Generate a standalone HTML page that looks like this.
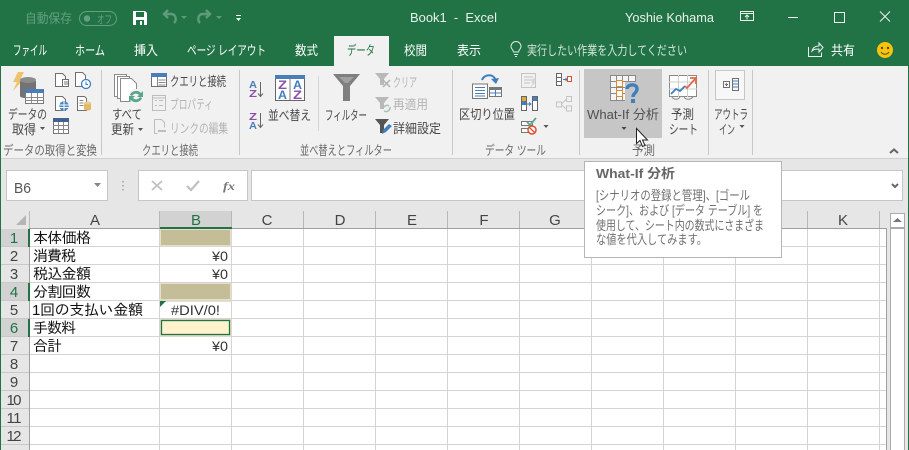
<!DOCTYPE html>
<html lang="ja"><head><meta charset="utf-8"><title>Book1 - Excel</title>
<style>
html,body{margin:0;padding:0;background:#e6e6e6;width:909px;height:450px;overflow:hidden}
svg{display:block}
text{font-family:"Liberation Sans","Noto Sans CJK JP",sans-serif;font-size:13px;fill:#484848;white-space:pre}
.w text{fill:#fff}
.d text{fill:#b4b4b4}
.l text{fill:#6a6a6a}
.c text{font-family:"Liberation Sans","IPAGothic",sans-serif;font-size:15px;fill:#111}
.h text{font-size:15px;fill:#444;text-anchor:middle}
.t text{fill:#707070;font-size:13px}
</style></head><body>
<svg xmlns="http://www.w3.org/2000/svg" width="909" height="450" viewBox="0 0 909 450">
<!-- backgrounds -->
<rect width="909" height="450" fill="#e6e6e6"/>
<rect width="909" height="66" fill="#217346"/>
<rect y="66" width="909" height="92" fill="#f1f1f1"/>
<rect y="158" width="909" height="1" fill="#d0d0d0"/>
<rect x="334" y="36" width="55" height="31" fill="#f1f1f1"/>

<!-- title bar -->
<g fill="none" stroke="#659f80">
<rect x="79.500" y="11.500" width="37" height="14" rx="7"/>
</g>
<circle cx="87" cy="18.500" r="3.200" fill="#659f80"/>
<g><text x="25" y="23" textLength="47" lengthAdjust="spacingAndGlyphs" style="fill:#659f80">自動保存</text>
<text x="97" y="23" textLength="15" lengthAdjust="spacingAndGlyphs" style="fill:#659f80;font-size:11px">オフ</text></g>
<!-- save -->
<path d="M133 11h12l2 2v12h-14z" fill="#fff"/>
<rect x="136" y="12" width="8" height="5" fill="#217346"/>
<rect x="136" y="20" width="8" height="5" fill="#217346"/>
<rect x="140" y="21" width="2" height="4" fill="#fff"/>
<!-- undo/redo -->
<path d="M174 23c3-3 2-9-3-9h-6M168 10l-4 4 4 4" fill="none" stroke="#5f9a7b" stroke-width="2.400"/>
<path d="M181 16h6l-3 3z" fill="#5f9a7b"/>
<path d="M200 23c-3-3-2-9 3-9h6M206 10l4 4-4 4" fill="none" stroke="#5f9a7b" stroke-width="2.400"/>
<path d="M216 16h6l-3 3z" fill="#5f9a7b"/>
<rect x="236" y="15" width="5" height="1" fill="#fff"/>
<path d="M236 18h5l-2.500 3z" fill="#fff"/>
<g class="w">
<text x="410" y="22" textLength="87" lengthAdjust="spacingAndGlyphs" style="fill:#e8f1ec">Book1  -  Excel</text>
<text x="625" y="22" textLength="89" lengthAdjust="spacingAndGlyphs" style="fill:#e8f1ec">Yoshie Kohama</text>
<text x="13" y="55" textLength="34" lengthAdjust="spacingAndGlyphs">ファイル</text>
<text x="75" y="55" textLength="30" lengthAdjust="spacingAndGlyphs">ホーム</text>
<text x="134" y="55" textLength="24" lengthAdjust="spacingAndGlyphs">挿入</text>
<text x="187" y="55" textLength="79" lengthAdjust="spacingAndGlyphs">ページ レイアウト</text>
<text x="295" y="55" textLength="23" lengthAdjust="spacingAndGlyphs">数式</text>
<text x="404" y="55" textLength="23" lengthAdjust="spacingAndGlyphs">校閲</text>
<text x="457" y="55" textLength="24" lengthAdjust="spacingAndGlyphs">表示</text>
<text x="527" y="55" textLength="160" lengthAdjust="spacingAndGlyphs" style="fill:#d3e3da">実行したい作業を入力してください</text>
<text x="831" y="55" textLength="24" lengthAdjust="spacingAndGlyphs">共有</text>
</g>
<text x="347" y="55" textLength="28" lengthAdjust="spacingAndGlyphs" style="fill:#217346">データ</text>
<!-- window buttons -->
<g fill="none" stroke="#f0f0f0">
<rect x="740.500" y="11.500" width="13" height="9"/>
<path d="M741 13.500h12M747 19.500v-4M745 17l2-2 2 2"/>
<path d="M788 17.500h10"/>
<rect x="834.500" y="12.500" width="10" height="10"/>
<path d="M880 11.500l10 10M890 11.500l-10 10"/>
<!-- bulb -->
<path d="M513.500 52c0-2-2.500-3-2.500-5.500a5 5 0 0 1 10 0c0 2.500-2.500 3.500-2.500 5.500z" stroke="#e0ebe5"/>
<path d="M514 54.500h4M515 56.500h2" stroke="#e0ebe5"/>
<!-- share -->
<path d="M808.500 47v9.500h13v-4M812 51c1-4 4-5 7-5v-3l4 4.500-4 4.500v-3c-3 0-5 0-7 2z"/>
</g>
<circle cx="885" cy="50" r="8" fill="#f6c40f"/>
<circle cx="882" cy="48" r="1.200" fill="#5a4a00"/><circle cx="888" cy="48" r="1.200" fill="#5a4a00"/>
<path d="M881 52c2 3 6 3 8 0" fill="none" stroke="#5a4a00"/>

<!-- ribbon separators -->
<g fill="#c8c8c8">
<rect x="101" y="70" width="1" height="85"/><rect x="239" y="70" width="1" height="85"/>
<rect x="452" y="70" width="1" height="85"/><rect x="579" y="70" width="1" height="85"/>
<rect x="708" y="70" width="1" height="85"/><rect x="752" y="70" width="1" height="85"/>
<rect x="318" y="76" width="1" height="55" fill="#d6d6d6"/>
</g>

<!-- What-If highlight -->
<rect x="584" y="69" width="78" height="69" fill="#c6c6c6"/>

<!-- Group 1 icons -->
<path d="M18 72h6l-4 8h3l-10 11 4-9h-4z" fill="#efc36b"/>
<path d="M20 81v15c0 3 16 3 16 0V81z" fill="#737373"/>
<ellipse cx="28" cy="80" rx="8" ry="3" fill="#8c8c8c"/>
<rect x="25.500" y="89.500" width="18" height="14" fill="#fff" stroke="#7a7a7a"/>
<rect x="25" y="89" width="19" height="4" fill="#4a7ebb"/>
<path d="M25 97.500h19M25 100.500h19M31.500 93v11M37.500 93v11" stroke="#8a8a8a" fill="none"/>
<g fill="#fff" stroke="#6f6f6f">
<path d="M55.500 73.500h7l3 3v10h-10z"/><rect x="62.500" y="79.500" width="6" height="7"/>
<path d="M75.500 72.500h7l3 3v6h-3v5h-7z"/>
<path d="M55.500 96.500h7l3 3v11h-10z"/>
<path d="M77.500 96.500h7l2 2v12h-9z"/>
</g>
<path d="M64 82h4M64 84h4" stroke="#777"/>
<circle cx="86" cy="84" r="4.500" fill="#fff" stroke="#3f7fbf" stroke-width="1.300"/><path d="M86 81.500v3h2" stroke="#3f7fbf" fill="none"/>
<circle cx="64" cy="106" r="4.800" fill="#4a86c0"/><path d="M59.500 105h9M59.500 107.500h9M64 101.500v9" stroke="#fff" fill="none"/>
<path d="M79.500 100.500h4M79.500 103h4M79.500 105.500h4" stroke="#888"/>
<path d="M84 103v6c0 2 7 2 7 0v-6z" fill="#e3b868"/><ellipse cx="87.500" cy="103" rx="3.500" ry="1.500" fill="#eecb89"/>
<rect x="53.500" y="118.500" width="15" height="15" fill="#fff" stroke="#777"/>
<rect x="53" y="118" width="16" height="4" fill="#43618c"/>
<path d="M53 125.500h16M53 129.500h16M58.500 122v12M63.500 122v12" stroke="#888" fill="none"/>
<text x="8" y="119" textLength="39" lengthAdjust="spacingAndGlyphs">データの</text>
<text x="12" y="134" textLength="24" lengthAdjust="spacingAndGlyphs">取得</text>
<path d="M40 127h5l-2.500 3z" fill="#555"/>

<!-- Group 2 -->
<g fill="#fff" stroke="#8a8a8a">
<path d="M114.500 74.500h12v22h-12z"/><path d="M117.500 76.500h12v22h-12z"/><path d="M120.500 78.500h11l5 5v18h-16z"/>
</g>
<circle cx="136" cy="96.500" r="7.500" fill="#f1f1f1"/>
<path d="M130 95c1-4 8-6 11-2l2-2v6h-6l2-2c-2-2-5-2-7 1zM142 98c-1 4-8 6-11 2l-2 2v-6h6l-2 2c2 2 5 2 7-1z" fill="#5aa58b"/>
<text x="112" y="119" textLength="30" lengthAdjust="spacingAndGlyphs">すべて</text>
<text x="111" y="134" textLength="23" lengthAdjust="spacingAndGlyphs">更新</text>
<path d="M138 128h5l-2.500 3z" fill="#555"/>
<rect x="151.500" y="73.500" width="15" height="13" fill="#fff" stroke="#6f6f6f"/>
<rect x="151" y="73" width="16" height="4" fill="#4a7ebb"/>
<path d="M158.500 80h7M158.500 82.500h7M158.500 85h7M157.500 77v9" stroke="#888" fill="none"/>
<text x="170" y="86" textLength="56" lengthAdjust="spacingAndGlyphs">クエリと接続</text>
<g fill="none" stroke="#bdbdbd">
<rect x="152.500" y="95.500" width="13" height="15"/><path d="M155 100.500h2M159 100.500h4M155 105.500h2M159 105.500h4M152 98h14"/>
<path d="M154.500 119.500h7l3 3v5M154.500 119.500v14h3"/><path d="M158 131h8" stroke-width="2"/>
</g>
<g class="d">
<text x="170" y="109" textLength="43" lengthAdjust="spacingAndGlyphs">プロパティ</text>
<text x="170" y="133" textLength="58" lengthAdjust="spacingAndGlyphs">リンクの編集</text>
</g>

<!-- Group 3 -->
<text x="249" y="88" textLength="8" style="fill:#4a7ebb;font-size:10px;font-weight:bold" lengthAdjust="spacingAndGlyphs">A</text>
<text x="249" y="97" textLength="8" style="fill:#8a4fa8;font-size:10px;font-weight:bold" lengthAdjust="spacingAndGlyphs">Z</text>
<text x="249" y="120" textLength="8" style="fill:#8a4fa8;font-size:10px;font-weight:bold" lengthAdjust="spacingAndGlyphs">Z</text>
<text x="249" y="129" textLength="8" style="fill:#4a7ebb;font-size:10px;font-weight:bold" lengthAdjust="spacingAndGlyphs">A</text>
<path d="M260.500 82v14M258 93.500l2.500 3 2.500-3M260.500 113v14M258 124.500l2.500 3 2.500-3" fill="none" stroke="#666"/>
<rect x="275.500" y="75.500" width="29" height="25" fill="#fff" stroke="#666"/>
<rect x="275" y="75" width="30" height="4" fill="#4a7ebb"/>
<rect x="289.500" y="79" width="1" height="21" fill="#777"/>
<text x="278" y="89" textLength="9" lengthAdjust="spacingAndGlyphs" style="fill:#8a4fa8;font-size:12px;font-weight:bold">Z</text>
<text x="278" y="99" textLength="9" lengthAdjust="spacingAndGlyphs" style="fill:#3f7fbf;font-size:12px;font-weight:bold">A</text>
<text x="293" y="89" textLength="9" lengthAdjust="spacingAndGlyphs" style="fill:#3f7fbf;font-size:12px;font-weight:bold">A</text>
<text x="293" y="99" textLength="9" lengthAdjust="spacingAndGlyphs" style="fill:#8a4fa8;font-size:12px;font-weight:bold">Z</text>
<text x="268" y="120" textLength="43" lengthAdjust="spacingAndGlyphs">並べ替え</text>
<path d="M333 74h27l-10 12v15h-7V86z" fill="#7f7f7f"/>
<path d="M339 77h15l-6 6h-3z" fill="#a0a0a0"/>
<text x="325" y="120" textLength="42" lengthAdjust="spacingAndGlyphs">フィルター</text>
<path d="M375 73h14l-5 6v6h-4v-6z" fill="#b9b9b9"/>
<path d="M383 80l7 7M390 80l-7 7" stroke="#b0b0b0" stroke-width="1.500" fill="none"/>
<path d="M375 97h14l-5 6v6h-4v-6z" fill="#b9b9b9"/>
<path d="M383 109a4 4 0 0 1 6-3M390 107a4 4 0 0 1-6 4" stroke="#a8bfb5" stroke-width="1.500" fill="none"/>
<g class="d">
<text x="393" y="87" textLength="24" lengthAdjust="spacingAndGlyphs">クリア</text>
<text x="393" y="109" textLength="35" lengthAdjust="spacingAndGlyphs">再適用</text>
</g>
<path d="M375 119h14l-5 6v8h-4v-8z" fill="#555"/>
<path d="M382 134l1-4 6-6 3 2-6 6z" fill="#3f7fbf"/>
<text x="393" y="133" textLength="48" lengthAdjust="spacingAndGlyphs">詳細設定</text>
<g class="l">
<text x="3" y="155" textLength="94" lengthAdjust="spacingAndGlyphs">データの取得と変換</text>
<text x="142" y="155" textLength="56" lengthAdjust="spacingAndGlyphs">クエリと接続</text>
<text x="300" y="155" textLength="92" lengthAdjust="spacingAndGlyphs">並べ替えとフィルター</text>
<text x="485" y="155" textLength="61" lengthAdjust="spacingAndGlyphs">データ ツール</text>
<text x="632" y="155" textLength="23" lengthAdjust="spacingAndGlyphs">予測</text>
</g>

<!-- Group 4 -->
<path d="M482 80c2-6 12-7 14 1" fill="none" stroke="#3f7fbf" stroke-width="2"/>
<path d="M491 79l5 5 3-6z" fill="#3f7fbf"/>
<rect x="472.500" y="84" width="15" height="14.500" fill="#fff" stroke="#777"/>
<path d="M475 87.500h10M475 90.500h10M475 93.500h10M475 96h10" stroke="#4a7ebb"/>
<rect x="489.500" y="87.500" width="12" height="9" fill="#fff" stroke="#777"/>
<rect x="490" y="88" width="11" height="2" fill="#777"/>
<path d="M495.500 90v6M490 93h11" stroke="#4a7ebb"/>
<text x="459" y="119" textLength="56" lengthAdjust="spacingAndGlyphs">区切り位置</text>
<g fill="none" stroke="#c4c4c4">
<rect x="521.500" y="73.500" width="14" height="14"/><path d="M524 77h9M524 80h9M524 83h6"/>
<rect x="556.500" y="102" width="5" height="5"/><rect x="566.500" y="96.500" width="5" height="5"/><rect x="566.500" y="106" width="5" height="5"/>
<path d="M561.500 104l5-5M561.500 105l5 4"/>
</g>
<path d="M534 78l-3 5h2l-3 5 6-6h-2l2-4z" fill="#d4d4d4"/>
<rect x="521.500" y="96.500" width="5" height="14" fill="#fff" stroke="#666"/><rect x="522" y="97" width="4" height="4" fill="#e1a93a"/><rect x="522" y="101" width="4" height="4" fill="#3f7fbf"/>
<rect x="532.500" y="96.500" width="5" height="14" fill="#fff" stroke="#666"/><rect x="533" y="97" width="4" height="4" fill="#3f7fbf"/>
<path d="M527 104h4M529 102.500l2 1.500-2 1.500" stroke="#3f7fbf" fill="none"/>
<rect x="521.500" y="121.500" width="11" height="4" fill="#fff" stroke="#777"/><rect x="521.500" y="128.500" width="9" height="4" fill="#fff" stroke="#777"/>
<path d="M527 122l3 3 6-7" stroke="#5aa58b" stroke-width="1.800" fill="none"/>
<circle cx="532" cy="130" r="4" fill="#fff" stroke="#d9502f" stroke-width="1.500"/><path d="M529.500 127.500l5 5" stroke="#d9502f" stroke-width="1.300"/>
<path d="M543.500 125h5l-2.500 3z" fill="#555"/>
<rect x="556.500" y="73.500" width="5" height="12" fill="#fff" stroke="#666"/><path d="M556 77.500h6M556 81.500h6" stroke="#666"/>
<path d="M563 79.500h4M565.500 78l1.500 1.500-1.500 1.500" stroke="#3f7fbf" fill="none"/>
<rect x="567.500" y="76.500" width="4" height="5" fill="#fff" stroke="#d9502f"/>

<!-- Group 5 -->
<rect x="610.500" y="75.500" width="25" height="25" fill="#f4f4f4" stroke="#8a8a8a"/>
<path d="M610 81.500h26M610 87.500h26M610 93.500h26M616.500 75v26M622.500 75v26M628.500 75v26" stroke="#8a8a8a" fill="none"/>
<rect x="616.500" y="80.500" width="6" height="6" fill="#fff" stroke="#e08b2c"/>
<rect x="616.500" y="90.500" width="6" height="6" fill="#fff" stroke="#e08b2c"/>
<rect x="625" y="82" width="15" height="22" fill="#c6c6c6"/>
<path d="M627 89c0-5 10-6 10 0 0 4-4 4-4 8" fill="none" stroke="#3f7fbf" stroke-width="3.400"/>
<rect x="631" y="99" width="4" height="4" fill="#3f7fbf"/>
<text x="587" y="119" textLength="72" lengthAdjust="spacingAndGlyphs" style="fill:#505050">What-If 分析</text>
<path d="M621.500 127h5l-2.500 3z" fill="#444"/>
<rect x="669.500" y="75.500" width="27" height="21" fill="#fff" stroke="#8a8a8a"/>
<path d="M669 82h28M669 89h28M678.500 75v22M687.500 75v22" stroke="#cfcfcf" fill="none"/>
<path d="M671 94l5-5 4 2 5-5" fill="none" stroke="#3f7fbf" stroke-width="1.800"/>
<path d="M685 86l2 2 8-9M690 78h6v6" fill="none" stroke="#dd6b4a" stroke-width="1.800"/>
<path d="M672 97c2 3 6 3 8 0M684 97c2 3 6 3 9 0" fill="none" stroke="#888"/>
<text x="671" y="119" textLength="23" lengthAdjust="spacingAndGlyphs">予測</text>
<text x="669" y="134" textLength="29" lengthAdjust="spacingAndGlyphs">シート</text>

<!-- Group 6 -->
<rect x="715.500" y="70.500" width="29" height="29" fill="#f7f7f7" stroke="#c6c6c6"/>
<g fill="none" stroke="#6f6f6f">
<rect x="723.500" y="81.500" width="6" height="6"/><path d="M725 84.500h3M726.500 83v3"/>
<rect x="732.500" y="78.500" width="6" height="12"/>
</g>
<path d="M733 81h5M733 84h5M733 87h5" stroke="#4a7ebb"/>
<text x="714" y="119" textLength="34" lengthAdjust="spacingAndGlyphs">アウトラ</text>
<text x="719" y="134" textLength="16" lengthAdjust="spacingAndGlyphs">イン</text>
<path d="M739.500 125h5l-2.500 3z" fill="#555"/>
<path d="M890 153l4-3.500 4 3.500" fill="none" stroke="#666" stroke-width="2"/>

<!-- formula bar -->
<rect x="6.500" y="170.500" width="101" height="30" fill="#fff" stroke="#c6c6c6"/>
<text x="14" y="193" textLength="17" lengthAdjust="spacingAndGlyphs" style="font-size:15px;fill:#555">B6</text>
<path d="M94 183h7l-3.500 4z" fill="#888"/>
<path d="M123 181v1.500M123 185v1.500M123 189v1.500" stroke="#b4b4b4" stroke-width="2" fill="none"/>
<rect x="138.500" y="170.500" width="109" height="30" fill="#fff" stroke="#c6c6c6"/>
<rect x="251.500" y="170.500" width="651" height="30" fill="#fff" stroke="#c6c6c6"/>
<path d="M152 181l10 9M162 181l-10 9" stroke="#c0c0c0" stroke-width="1.800" fill="none"/>
<path d="M187 186l4 4 8-9" stroke="#c0c0c0" stroke-width="2.200" fill="none"/>
<text x="223" y="190" textLength="12" lengthAdjust="spacingAndGlyphs" style="font-family:'Liberation Serif',serif;font-style:italic;font-weight:bold;font-size:12px;fill:#777">fx</text>
<path d="M892 184l3 3 3-3" fill="none" stroke="#666" stroke-width="2"/>

<!-- sheet -->
<rect x="30" y="229" width="857" height="221" fill="#fff"/>
<rect x="160" y="211" width="72" height="18" fill="#d2d2d2"/>
<rect x="1" y="229" width="28" height="18" fill="#d2d2d2"/>
<rect x="1" y="283" width="28" height="18" fill="#d2d2d2"/>
<rect x="1" y="319" width="28" height="18" fill="#d2d2d2"/>
<path d="M26 215v10H16z" fill="#b5b5b5"/>
<g stroke="#d4d4d4" fill="none">
<path d="M30 246.500h857M30 264.500h857M30 282.500h857M30 300.500h857M30 318.500h857M30 336.500h857M30 354.500h857M30 372.500h857M30 390.500h857M30 408.500h857M30 426.500h857M30 444.500h857"/>
<path d="M159.500 229v221M231.500 229v221M303.500 229v221M375.500 229v221M447.500 229v221M519.500 229v221M591.500 229v221M663.500 229v221M735.500 229v221M807.500 229v221"/>
</g>
<g stroke="#c8c8c8" fill="none">
<path d="M1 246.500h28M1 264.500h28M1 282.500h28M1 300.500h28M1 318.500h28M1 336.500h28M1 354.500h28M1 372.500h28M1 390.500h28M1 408.500h28M1 426.500h28M1 444.500h28"/>
</g>
<g stroke="#b8b8b8" fill="none">
<path d="M29.500 211v17M159.500 211v17M231.500 211v17M303.500 211v17M375.500 211v17M447.500 211v17M519.500 211v17M591.500 211v17M663.500 211v17M735.500 211v17M807.500 211v17M879.500 211v17"/>
</g>
<rect x="29" y="228" width="858" height="1" fill="#9f9f9f"/>
<rect x="29" y="228" width="1" height="222" fill="#9f9f9f"/>
<rect x="886" y="228" width="1" height="222" fill="#9f9f9f"/>
<rect x="879" y="229" width="1" height="221" fill="#d4d4d4"/>
<rect x="160" y="227" width="72" height="2" fill="#217346"/>
<rect x="28" y="229" width="2" height="18" fill="#217346"/>
<rect x="28" y="283" width="2" height="18" fill="#217346"/>
<rect x="28" y="319" width="2" height="18" fill="#217346"/>

<g class="h">
<text x="95" y="225">A</text>
<text x="196" y="225" style="fill:#217346">B</text>
<text x="267" y="225">C</text><text x="340" y="225">D</text><text x="412" y="225">E</text>
<text x="484" y="225">F</text><text x="555" y="225">G</text><text x="843" y="225">K</text>
<text x="14" y="243" style="fill:#217346">1</text><text x="14" y="261">2</text><text x="14" y="279">3</text>
<text x="14" y="297" style="fill:#217346">4</text><text x="14" y="315">5</text><text x="14" y="333" style="fill:#217346">6</text>
<text x="14" y="351">7</text><text x="14" y="369">8</text><text x="14" y="387">9</text>
<text x="14" y="405" textLength="15" lengthAdjust="spacing">10</text>
<text x="14" y="423" textLength="15" lengthAdjust="spacing">11</text>
<text x="14" y="441" textLength="15" lengthAdjust="spacing">12</text>
</g>

<!-- colored cells -->
<rect x="160" y="229" width="71.500" height="17.500" fill="#e3dfca"/><rect x="161" y="230" width="69" height="15" fill="#c4bd97"/>
<rect x="160" y="283" width="71.500" height="17.500" fill="#e3dfca"/><rect x="161" y="284" width="69" height="15" fill="#c4bd97"/>
<rect x="160" y="301" width="71.500" height="1" fill="#e3dfca"/>
<rect x="160" y="319" width="71.500" height="17.500" fill="#e3dfca"/>
<rect x="161.500" y="320.500" width="68" height="14" fill="#fff2cc" stroke="#217346" stroke-width="1.300"/>
<path d="M160 301h6l-6 6z" fill="#217346"/>

<g class="c">
<text x="33" y="243" textLength="58" lengthAdjust="spacing">本体価格</text>
<text x="33" y="261" textLength="43" lengthAdjust="spacing">消費税</text>
<text x="33" y="279" textLength="58" lengthAdjust="spacing">税込金額</text>
<text x="33" y="297" textLength="58" lengthAdjust="spacing">分割回数</text>
<text x="32" y="315" textLength="111" lengthAdjust="spacing">1回の支払い金額</text>
<text x="33" y="333" textLength="43" lengthAdjust="spacing">手数料</text>
<text x="33" y="351" textLength="29" lengthAdjust="spacing">合計</text>
<text x="212" y="261" textLength="16" lengthAdjust="spacingAndGlyphs" style="font-size:14px;fill:#333">¥0</text>
<text x="212" y="279" textLength="16" lengthAdjust="spacingAndGlyphs" style="font-size:14px;fill:#333">¥0</text>
<text x="171" y="315" textLength="49" lengthAdjust="spacingAndGlyphs" style="font-size:14px;fill:#333">#DIV/0!</text>
<text x="212" y="351" textLength="16" lengthAdjust="spacingAndGlyphs" style="font-size:14px;fill:#333">¥0</text>
</g>

<!-- scrollbar & frame -->
<rect x="890.500" y="213.500" width="14" height="14" fill="#fff" stroke="#ababab"/>
<path d="M893 222l4.500-4 4.500 4z" fill="#777"/>
<rect x="890.500" y="228.500" width="14" height="222" fill="#fff" stroke="#ababab"/>
<rect x="0" y="66" width="1" height="384" fill="#217346"/>
<rect x="908" y="66" width="1" height="384" fill="#217346"/>

<!-- tooltip -->
<rect x="584.500" y="161.500" width="197" height="96" fill="#fff" stroke="#b5b5b5"/>
<text x="596" y="178" textLength="79" lengthAdjust="spacingAndGlyphs" style="font-weight:bold;fill:#666">What-If 分析</text>
<g class="t">
<text x="596" y="200" textLength="154" lengthAdjust="spacingAndGlyphs">[シナリオの登録と管理]、[ゴール</text>
<text x="596" y="215" textLength="167" lengthAdjust="spacingAndGlyphs">シーク]、および [データ テーブル] を</text>
<text x="596" y="230" textLength="168" lengthAdjust="spacingAndGlyphs">使用して、シート内の数式にさまざま</text>
<text x="596" y="244" textLength="111" lengthAdjust="spacingAndGlyphs">な値を代入してみます。</text>
</g>

<!-- cursor -->
<path d="M636.500 128.500v15l3.500-3 2.500 6 2.500-1-2.500-5.500h5z" fill="#fff" stroke="#222"/>
</svg>
</body></html>
